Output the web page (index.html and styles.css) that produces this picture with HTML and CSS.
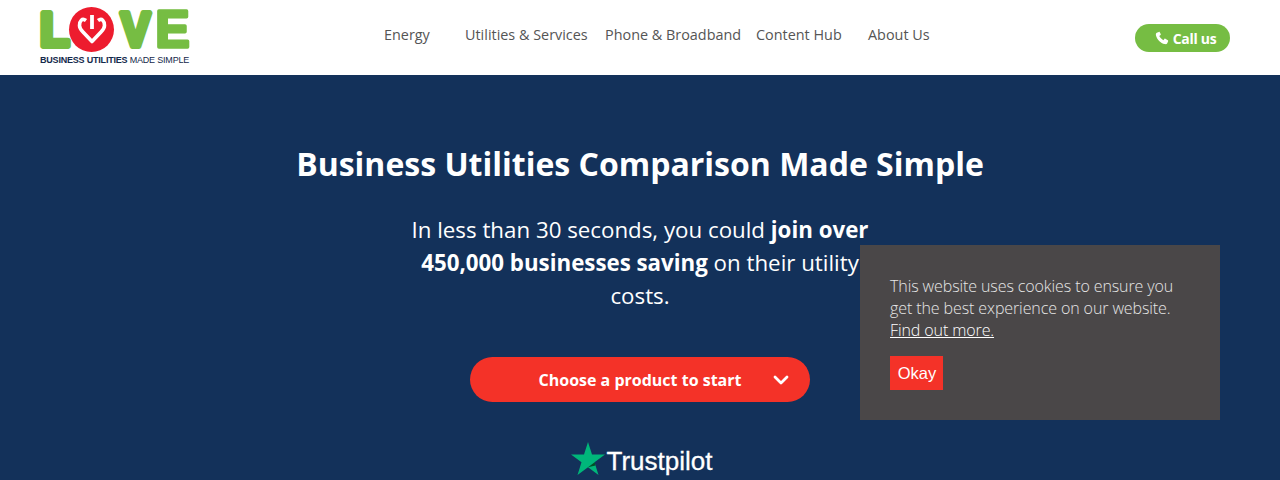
FILE: index.html
```html
<!DOCTYPE html>
<html lang="en">
<head>
    <meta charset="UTF-8">
    <meta name="viewport" content="width=device-width, initial-scale=1.0">
    <title>Business Utilities Comparison Made Simple</title>
    <link rel="stylesheet" href="styles.css">
</head>
<body>
    <header class="site-header">
        <a class="logo" href="#">
            <svg class="logo-mark" width="150" height="47" viewBox="0 0 150 47" aria-label="Love">
                <text class="logo-letter" x="0" y="39" font-size="48">L</text>
                <circle cx="51.500" cy="22.500" r="22.500" fill="#ed1c2e"/>
                <path d="M46 13.500C42 10.500 39.500 14 39.500 18.500C39.500 21 41 23 43 25L52 34.500L61 25C63 23 64.500 21 64.500 18.500C64.500 14 62 10.500 58 13.500" fill="none" stroke="#fff" stroke-width="3.600" stroke-linejoin="round"/>
                <path d="M52 8v14" fill="none" stroke="#fff" stroke-width="3.800"/>
                <text class="logo-letter" x="81" y="39" font-size="48" textLength="29" lengthAdjust="spacingAndGlyphs">V</text>
                <text class="logo-letter logo-letter-thin" x="115.500" y="40" font-size="51">E</text>
            </svg>
            <span class="logo-tag"><b>BUSINESS UTILITIES</b> MADE SIMPLE</span>
        </a>
        <nav class="main-nav">
            <a href="#">Energy</a>
            <a href="#">Utilities &amp; Services</a>
            <a href="#">Phone &amp; Broadband</a>
            <a href="#">Content Hub</a>
            <a href="#">About Us</a>
        </nav>
        <a class="call-btn" href="#">
            <svg width="14" height="14" viewBox="0 0 24 24"><path fill="#fff" d="M6.600 1.500 3 3C1.500 3.700 1.200 5.500 1.700 7.500 3.500 14.500 9.500 20.500 16.500 22.300c2 .5 3.800.2 4.500-1.300l1.500-3.600c.2-.6 0-1.200-.5-1.500l-4.300-2.700c-.5-.3-1.200-.2-1.600.3l-1.800 2.200c-3-1.500-5.500-4-7-7l2.200-1.800c.5-.4.6-1.100.3-1.600L8.100 2c-.3-.5-.9-.7-1.500-.5z"/></svg>
            Call us
        </a>
    </header>

    <section class="hero">
        <h1>Business Utilities Comparison Made Simple</h1>
        <p class="hero-text">In less than 30 seconds, you could <strong>join over 450,000 businesses saving</strong> on their utility costs.</p>
        <button class="start-btn" type="button">
            <span>Choose a product to start</span>
            <svg class="start-chevron" width="16" height="10" viewBox="0 0 16 10"><path d="M2 2l6 6 6-6" fill="none" stroke="#fff" stroke-width="2.800" stroke-linecap="round" stroke-linejoin="round"/></svg>
        </button>
        <div class="trustpilot">
            <svg width="34" height="33" viewBox="0 0 34 33">
                <path fill="#00b67a" d="M17 0l4 12.500h13L23.500 20.300l4 12.700L17 25.200 6.500 33l4-12.700L0 12.500h13z"/>
                <path fill="#005128" d="M24.500 23.500l-.9-3.200L17 25.200z"/>
            </svg>
            <span>Trustpilot</span>
        </div>
    </section>

    <div class="cookie-box">
        <p>This website uses cookies to ensure you get the best experience on our website. <a href="#">Find out more.</a></p>
        <button class="cookie-ok" type="button">Okay</button>
    </div>
</body>
</html>
```

FILE: styles.css
```css
* {
    box-sizing: border-box;
}
html, body {
    height: 480px;
    overflow: hidden;
}
body {
    margin: 0;
    font-family: "Open Sans", Arial, sans-serif;
    background-color: #13315a;
}
a {
    text-decoration: none;
}
.site-header {
    display: flex;
    align-items: flex-start;
    height: 75px;
    padding: 0 50px 0 40px;
    background-color: #fff;
}
.logo {
    display: block;
    width: 150px;
    margin-top: 7px;
}
.logo-mark {
    display: block;
    overflow: visible;
}
.logo-letter {
    font-family: "Liberation Sans", Arial, sans-serif;
    font-weight: 700;
    fill: #76bd43;
    stroke: #76bd43;
    stroke-width: 6;
    stroke-linejoin: round;
}
.logo-letter-thin {
    stroke-width: 3.500;
}
.logo-tag {
    display: block;
    margin-top: 1px;
    font-family: "Liberation Sans", Arial, sans-serif;
    font-size: 9px;
    line-height: 10px;
    letter-spacing: -0.2px;
    white-space: nowrap;
    color: #14294b;
}
.main-nav {
    display: grid;
    grid-template-columns: 81px 140px 151px 112px auto;
    margin-left: 194px;
    padding-top: 25px;
    font-size: 14.400px;
    line-height: 19px;
}
.main-nav a {
    color: #555;
    white-space: nowrap;
}
.call-btn {
    display: flex;
    align-items: center;
    justify-content: center;
    gap: 4px;
    width: 95px;
    height: 28px;
    margin-top: 24px;
    margin-left: auto;
    padding-left: 6px;
    border-radius: 14px;
    background-color: #76bd43;
    color: #fff;
    font-size: 14px;
    font-weight: 700;
    letter-spacing: -0.3px;
}
.hero {
    display: flex;
    flex-direction: column;
    align-items: center;
    padding-top: 66px;
    color: #fff;
    text-align: center;
}
.hero h1 {
    margin: 0;
    font-size: 32px;
    line-height: 46px;
    font-weight: 700;
}
.hero-text {
    width: 480px;
    margin: 26px 0 0;
    font-size: 22.300px;
    line-height: 33px;
}
.start-btn {
    position: relative;
    width: 340px;
    height: 45px;
    margin-top: 45px;
    padding: 0;
    border: none;
    border-radius: 23px;
    background-color: #f43228;
    color: #fff;
    font-family: inherit;
    font-size: 16px;
    font-weight: 700;
}
.start-chevron {
    position: absolute;
    top: 18px;
    right: 21px;
}
.trustpilot {
    display: flex;
    align-items: flex-end;
    margin-top: 40px;
    margin-left: 3px;
    font-family: "Liberation Sans", Arial, sans-serif;
    font-size: 26px;
    line-height: 28px;
    -webkit-text-stroke: 0.3px #fff;
}
.trustpilot span {
    margin-left: 2px;
}
.cookie-box {
    position: fixed;
    right: 60px;
    bottom: 60px;
    width: 360px;
    height: 175px;
    padding: 30px;
    background-color: #4a4748;
    color: #e6e6e6;
    font-size: 16px;
    font-weight: 300;
    line-height: 22px;
}
.cookie-box p {
    margin: 0;
    letter-spacing: -0.1px;
}
.cookie-box a {
    color: #fff;
    text-decoration: underline;
}
.cookie-ok {
    display: block;
    width: 53px;
    height: 34px;
    margin-top: 15px;
    padding: 1px 0 0 1px;
    border: none;
    background-color: #f43228;
    color: #fff;
    font-family: "Liberation Sans", Arial, sans-serif;
    font-size: 16.500px;
}
```
